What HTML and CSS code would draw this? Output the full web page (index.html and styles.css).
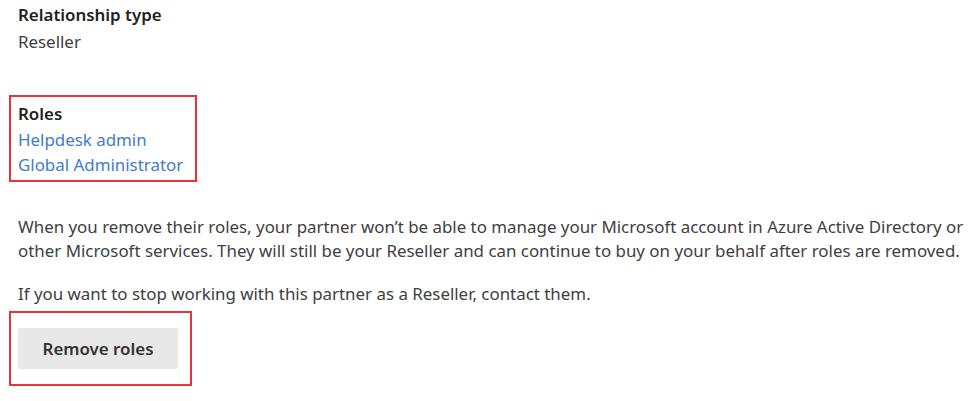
FILE: index.html
```html
<!DOCTYPE html>
<html>
<head>
<meta charset="utf-8">
<link rel="stylesheet" href="styles.css">
</head>
<body>
<div class="page">
  <div class="field">
    <div class="label">Relationship type</div>
    <div class="value">Reseller</div>
  </div>
  <div class="highlight roles">
    <div class="label">Roles</div>
    <a class="link" href="#">Helpdesk admin</a>
    <a class="link" href="#">Global Administrator</a>
  </div>
  <p class="text first">When you remove their roles, your partner won’t be able to manage your Microsoft account in Azure Active Directory or other Microsoft services. They will still be your Reseller and can continue to buy on your behalf after roles are removed.</p>
  <p class="text">If you want to stop working with this partner as a Reseller, contact them.</p>
  <div class="highlight action">
    <button class="btn">Remove roles</button>
  </div>
</div>
</body>
</html>
```
FILE: styles.css
```css
html, body {
  margin: 0;
  padding: 0;
  background: #ffffff;
}
.page {
  font-family: "Noto Sans", "Open Sans", sans-serif;
  font-size: 16.9px;
  color: #404040;
  padding: 2px 0 0 18px;
  width: 955px;
}
.field {
  display: flex;
  flex-direction: column;
}
.label {
  font-weight: 600;
  color: #222222;
  line-height: 26px;
}
.value {
  line-height: 28px;
}
.highlight {
  border: 2px solid #e8323c;
  margin-left: -9px;
  padding-left: 7px;
}
.roles {
  margin-top: 39px;
  width: 188px;
  display: flex;
  flex-direction: column;
  padding-top: 4px;
  box-sizing: border-box;
  height: 87px;
}
.link {
  color: #3f7dcc;
  text-decoration: none;
  line-height: 25px;
}
.text {
  margin: 0;
  line-height: 24px;
}
.text.first {
  margin-top: 33px;
  margin-bottom: 19px;
}
.action {
  margin-top: 5px;
  width: 183px;
  height: 75px;
  box-sizing: border-box;
  padding-top: 15px;
}
.btn {
  font-family: "Noto Sans", "Open Sans", sans-serif;
  font-size: 16.9px;
  font-weight: 600;
  color: #333333;
  background: #e8e8e8;
  border: none;
  border-radius: 2px;
  width: 160px;
  height: 41px;
  padding: 0;
}
```
